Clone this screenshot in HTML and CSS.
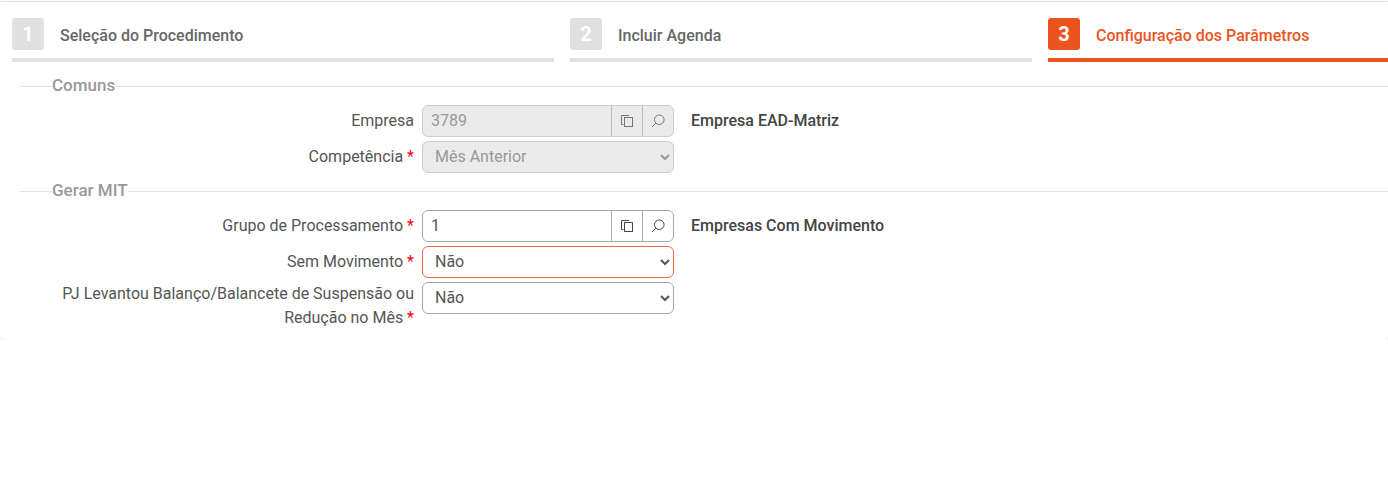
FILE: index.html
```html
<!DOCTYPE html>
<html lang="pt-BR">
<head>
<meta charset="utf-8">
<title>Configuração dos Parâmetros</title>
<link rel="stylesheet" href="styles.css">
</head>
<body>
<svg class="sprite" width="0" height="0" aria-hidden="true">
  <symbol id="i-copy" viewBox="0 0 14 14"><path d="M9 1.5H1.5V10.5H3.5" fill="none" stroke="currentColor"/><rect x="4.5" y="3.5" width="8" height="9" fill="none" stroke="currentColor"/></symbol>
  <symbol id="i-search" viewBox="0 0 14 14"><circle cx="8.3" cy="5.7" r="4.8" fill="none" stroke="currentColor"/><path d="M4.8 9.2 1 13" fill="none" stroke="currentColor"/></symbol>
</svg>
<main class="card">
  <nav class="steps">
    <div class="step step-a"><span class="num">1</span><span class="name">Seleção do Procedimento</span></div>
    <div class="step step-b"><span class="num">2</span><span class="name">Incluir Agenda</span></div>
    <div class="step step-c active"><span class="num">3</span><span class="name">Configuração dos Parâmetros</span></div>
  </nav>
  <fieldset class="group first">
    <legend>Comuns</legend>
    <div class="row">
      <label class="lbl">Empresa</label>
      <div class="lookup disabled">
        <input class="lookup-in" value="3789" disabled>
        <button class="lookup-btn" disabled><svg class="ico"><use href="#i-copy"/></svg></button>
        <button class="lookup-btn" disabled><svg class="ico"><use href="#i-search"/></svg></button>
      </div>
      <span class="desc">Empresa EAD-Matriz</span>
    </div>
    <div class="row">
      <label class="lbl">Competência <b class="req">*</b></label>
      <select class="sel" disabled><option>Mês Anterior</option></select>
    </div>
  </fieldset>
  <fieldset class="group second">
    <legend>Gerar MIT</legend>
    <div class="row">
      <label class="lbl">Grupo de Processamento <b class="req">*</b></label>
      <div class="lookup">
        <input class="lookup-in" value="1">
        <button class="lookup-btn"><svg class="ico"><use href="#i-copy"/></svg></button>
        <button class="lookup-btn"><svg class="ico"><use href="#i-search"/></svg></button>
      </div>
      <span class="desc">Empresas Com Movimento</span>
    </div>
    <div class="row">
      <label class="lbl">Sem Movimento <b class="req">*</b></label>
      <select class="sel focus"><option>Não</option></select>
    </div>
    <div class="row">
      <label class="lbl">PJ Levantou Balanço/Balancete de Suspensão ou Redução no Mês <b class="req">*</b></label>
      <select class="sel"><option>Não</option></select>
    </div>
  </fieldset>
</main>
</body>
</html>
```
FILE: styles.css
```css
* { box-sizing: border-box; }
html, body { margin: 0; padding: 0; background: #fff; }
body { font-family: Roboto, "Liberation Sans", sans-serif; font-size: 16px; color: #555; overflow: hidden; }
.sprite { position: absolute; }
.card {
  margin-top: 1px;
  height: 339px;
  border-top: 1px solid #e2e2e2;
  border-radius: 0 0 6px 6px;
  box-shadow: 0 1px 4px rgba(0, 0, 0, .1);
  overflow: hidden;
}
.steps { display: flex; gap: 16px; padding: 16px 0 0 12px; }
.step {
  display: flex;
  align-items: flex-start;
  gap: 16px;
  height: 44px;
  border-bottom: 4px solid #e0e0e0;
}
.step-a { width: 542px; }
.step-b { width: 462px; }
.step-c { flex: 1; }
.num {
  width: 32px;
  height: 32px;
  border-radius: 3px;
  background: #e0e0e0;
  color: #fff;
  font-size: 20px;
  font-weight: 700;
  display: flex;
  align-items: center;
  justify-content: center;
}
.name { font-weight: 500; font-size: 16px; line-height: 32px; padding-top: 2px; color: #666; }
.active { border-bottom-color: #ec541e; }
.active .num { background: #ec541e; }
.active .name { color: #ec541e; }
.group {
  margin: 0 0 0 20px;
  padding: 0;
  border: 0;
  border-top: 1px solid #e2e2e2;
  min-width: 0;
}
.first { margin-top: 14px; }
.second { margin-top: 4px; }
.group legend {
  margin-left: 32px;
  padding: 0 0 2px;
  font-size: 17px;
  line-height: 18px;
  font-weight: 500;
  color: #999;
}
.row:first-of-type { margin-top: 9px; }
.row { display: flex; align-items: flex-start; margin-bottom: 4px; }
.lbl {
  width: 402px;
  padding: 0 8px 0 0;
  text-align: right;
  font-size: 16px;
  line-height: 24px;
  color: #555;
  align-self: center;
}
.req { color: #f00; font-weight: 400; }
.lookup, .sel {
  width: 252px;
  height: 32px;
  flex: none;
  border: 1px solid #aaa;
  border-radius: 6px;
  background: #fff;
  font-family: inherit;
  font-size: 16px;
  color: #555;
}
.sel { padding: 0 0 2px 8px; }
.sel.focus { border-color: #ec6a3c; }
.sel:disabled { background: #ebebeb; border-color: #ccc; color: #999; opacity: 1; }
.lookup { display: flex; overflow: hidden; }
.lookup-in {
  flex: 1;
  min-width: 0;
  border: 0;
  padding: 0 0 1px 8px;
  background: transparent;
  font: inherit;
  color: inherit;
  outline: none;
}
.lookup-btn {
  width: 31px;
  padding: 0;
  border: 0;
  border-left: 1px solid #aaa;
  background: transparent;
  color: #444;
  display: flex;
  align-items: center;
  justify-content: center;
}
.ico { width: 14px; height: 14px; }
.lookup.disabled { background: #ebebeb; border-color: #ccc; color: #999; }
.disabled .lookup-in { color: #999; }
.disabled .lookup-btn { border-left-color: #bbb; color: #777; }
.desc { margin-left: 17px; font-weight: 500; font-size: 16px; line-height: 32px; color: #444; }
```
